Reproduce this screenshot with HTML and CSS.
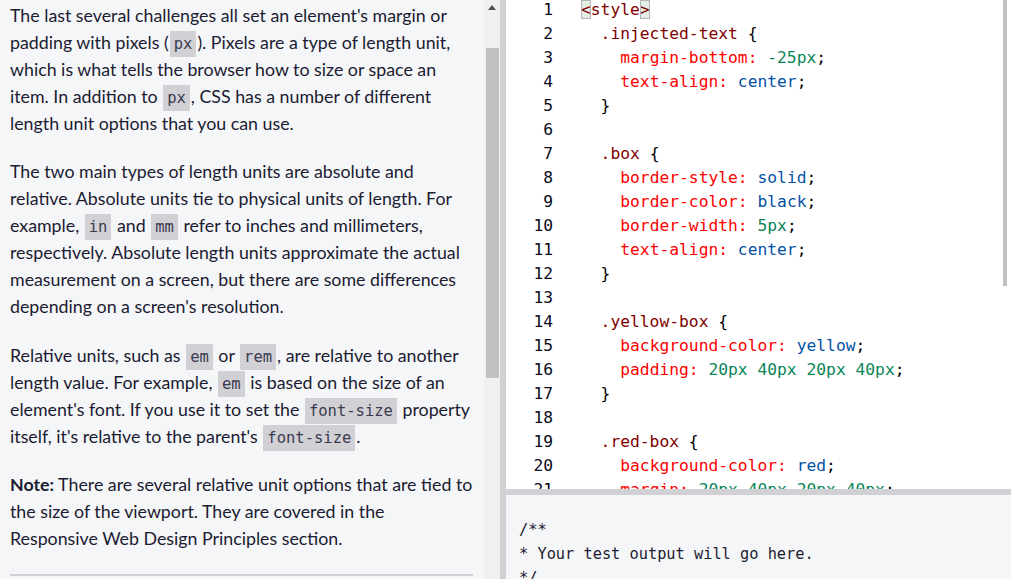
FILE: index.html
```html
<!DOCTYPE html>
<html>
<head>
<meta charset="utf-8">
<link rel="stylesheet" href="styles.css">
</head>
<body>
<div class="app">
  <section class="instructions">
    <div class="content">
      <p>The last several challenges all set an element's margin or padding with pixels (<code>px</code>). Pixels are a type of length unit, which is what tells the browser how to size or space an item. In addition to <code>px</code>, CSS has a number of different length unit options that you can use.</p>
      <p>The two main types of length units are absolute and relative. Absolute units tie to physical units of length. For example, <code>in</code> and <code>mm</code> refer to inches and millimeters, respectively. Absolute length units approximate the actual measurement on a screen, but there are some differences depending on a screen's resolution.</p>
      <p>Relative units, such as <code>em</code> or <code>rem</code>, are relative to another length value. For example, <code>em</code> is based on the size of an element's font. If you use it to set the <code>font-size</code> property itself, it's relative to the parent's <code>font-size</code>.</p>
      <p><strong>Note:</strong> There are several relative unit options that are tied to the size of the viewport. They are covered in the Responsive Web Design Principles section.</p>
      <hr class="rule">
    </div>
    <div class="vscroll">
      <div class="arrow"></div>
      <div class="thumb"></div>
    </div>
  </section>
  <div class="divider"></div>
  <section class="right">
    <div class="editor">
      <div class="gutter">
        <div>1</div><div>2</div><div>3</div><div>4</div><div>5</div><div>6</div><div>7</div><div>8</div><div>9</div><div>10</div><div>11</div><div>12</div><div>13</div><div>14</div><div>15</div><div>16</div><div>17</div><div>18</div><div>19</div><div>20</div><div>21</div>
      </div>
      <div class="code">
        <div class="ln"><span class="br">&lt;</span><span class="tag">style</span><span class="br">&gt;</span></div>
        <div class="ln">  <span class="sel">.injected-text</span> {</div>
        <div class="ln">    <span class="prop">margin-bottom:</span> <span class="num">-25px</span>;</div>
        <div class="ln">    <span class="prop">text-align:</span> <span class="val">center</span>;</div>
        <div class="ln">  }</div>
        <div class="ln"> </div>
        <div class="ln">  <span class="sel">.box</span> {</div>
        <div class="ln">    <span class="prop">border-style:</span> <span class="val">solid</span>;</div>
        <div class="ln">    <span class="prop">border-color:</span> <span class="val">black</span>;</div>
        <div class="ln">    <span class="prop">border-width:</span> <span class="num">5px</span>;</div>
        <div class="ln">    <span class="prop">text-align:</span> <span class="val">center</span>;</div>
        <div class="ln">  }</div>
        <div class="ln"> </div>
        <div class="ln">  <span class="sel">.yellow-box</span> {</div>
        <div class="ln">    <span class="prop">background-color:</span> <span class="val">yellow</span>;</div>
        <div class="ln">    <span class="prop">padding:</span> <span class="num">20px 40px 20px 40px</span>;</div>
        <div class="ln">  }</div>
        <div class="ln"> </div>
        <div class="ln">  <span class="sel">.red-box</span> {</div>
        <div class="ln">    <span class="prop">background-color:</span> <span class="val">red</span>;</div>
        <div class="ln">    <span class="prop">margin:</span> <span class="num">20px 40px 20px 40px</span>;</div>
      </div>
      <div class="escroll"><div class="ethumb"></div></div>
    </div>
    <div class="hsep"></div>
    <div class="output">
      <pre>/**
* Your test output will go here.
*/</pre>
    </div>
  </section>
</div>
</body>
</html>
```

FILE: styles.css
```css
* { box-sizing: border-box; }
html, body { margin: 0; padding: 0; }
body { width: 1011px; height: 579px; overflow: hidden; background: #fff; }

.app { display: flex; height: 579px; }

.instructions { width: 500px; display: flex; flex: none; height: 100%; }
.content {
  width: 484px;
  background: #f5f6f7;
  padding: 2px 8px 0 10px;
  overflow: hidden;
  font-family: Lato, "Open Sans", sans-serif;
  font-size: 17.8px;
  line-height: 27px;
  color: #1b1b32;
}
.content p { margin: 0 0 21.4px 0; }
.content strong { font-weight: 700; }
.content code {
  font-family: "DejaVu Sans Mono", "Liberation Mono", monospace;
  font-size: 15.5px;
  line-height: 1;
  background: #d0d0d5;
  color: #3b3b4f;
  padding: 4px 4px;
  margin: 0 1px;
}
.rule { border: none; border-top: 2px solid #d0d0d5; margin: 11px 3px 0 0; }

.vscroll { width: 16px; background: #f0f0f0; display: flex; flex-direction: column; align-items: center; }
.arrow {
  margin-top: 5px;
  width: 0; height: 0;
  border-left: 4px solid transparent;
  border-right: 4px solid transparent;
  border-bottom: 5px solid #505050;
}
.thumb { margin-top: 38px; width: 13px; height: 330px; background: #c1c1c1; }

.divider { width: 6px; flex: none; background: #d0d0d5; }

.right { flex: 1; display: flex; flex-direction: column; min-width: 0; }
.editor { height: 489px; flex: none; background: #fff; display: flex; overflow: hidden; }
.gutter, .code {
  font-family: "DejaVu Sans Mono", "Liberation Mono", monospace;
  font-size: 16.3px;
  line-height: 24px;
  margin-top: -2px;
}
.gutter { width: 47px; text-align: right; color: #0b0b20; flex: none; }
.code { padding-left: 28px; color: #000; flex: 1; }
.ln { white-space: pre; height: 24px; }
.br { color: #800000; background: #e4efe4; outline: 1px solid #b4b4b4; outline-offset: -1px; }
.tag { color: #800000; }
.sel { color: #800000; }
.prop { color: #ff0000; }
.val { color: #0451a5; }
.num { color: #098658; }
.escroll { width: 8px; flex: none; display: flex; justify-content: flex-start; }
.ethumb { width: 4px; height: 286px; background: #c1c1c1; }

.hsep { height: 6px; flex: none; background: #d0d0d5; }
.output { flex: 1; background: #f5f6f7; padding: 23px 0 0 13px; overflow: hidden; }
.output pre {
  margin: 0;
  font-family: "DejaVu Sans Mono", "Liberation Mono", monospace;
  font-size: 15.3px;
  line-height: 24px;
  color: #1b1b32;
}
```
